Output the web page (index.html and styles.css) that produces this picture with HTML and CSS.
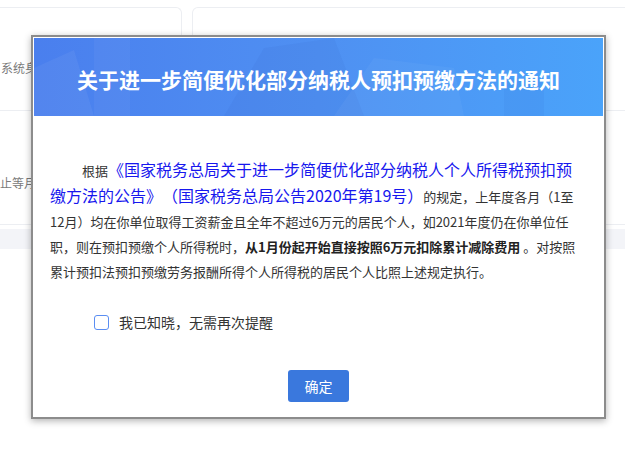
FILE: index.html
```html
<!DOCTYPE html>
<html lang="zh-CN">
<head>
    <meta charset="UTF-8">
    <meta name="viewport" content="width=device-width, initial-scale=1.0">
    <title>预扣预缴通知</title>
    <link rel="stylesheet" href="styles.css">
</head>
<body>
    <!-- page behind the notice -->
    <div class="page">
        <div class="cards">
            <div class="card card-left">
                <span class="muted">系统身份</span>
            </div>
            <div class="card card-right"></div>
        </div>
        <div class="row">
            <span class="muted">止等月份</span>
        </div>
        <div class="band"></div>
    </div>

    <div class="dialog">
        <div class="dialog-head">
            <svg class="head-art" width="570" height="78" viewBox="0 0 570 78">
                <path d="M0 78 L0 30 L40 12 L60 78 Z" fill="#ffffff" opacity="0.05"/>
                <rect x="60" y="0" width="36" height="78" fill="#ffffff" opacity="0.04"/>
                <path d="M190 78 L230 10 L300 0 L330 78 Z" fill="#1c3fa8" opacity="0.06"/>
                <path d="M300 78 L340 20 L420 30 L430 78 Z" fill="#ffffff" opacity="0.04"/>
                <rect x="470" y="40" width="40" height="38" fill="#1c3fa8" opacity="0.05"/>
            </svg>
            <h2>关于进一步简便优化部分纳税人预扣预缴方法的通知</h2>
        </div>
        <div class="dialog-body">
            <p class="notice">
                <span class="indent">根据</span><span class="link">《国家税务总局关于进一步简便优化部分纳税人个人所得税预扣预</span><br>
                <span class="link">缴方法的公告》（国家税务总局公告2020年第19号）</span>的规定，上年度各月（1至<br>
                12月）均在你单位取得工资薪金且全年不超过6万元的居民个人，如2021年度仍在你单位任<br>
                职，则在预扣预缴个人所得税时，<b>从1月份起开始直接按照6万元扣除累计减除费用</b> 。对按照<br>
                累计预扣法预扣预缴劳务报酬所得个人所得税的居民个人比照上述规定执行。
            </p>
            <label class="check">
                <span class="box"></span>
                <span>我已知晓，无需再次提醒</span>
            </label>
            <div class="actions">
                <button class="btn">确定</button>
            </div>
        </div>
    </div>
</body>
</html>
```

FILE: styles.css
```css
/* Base */
body {
    margin: 0;
    font-family: "Noto Sans CJK SC", "Noto Sans", sans-serif;
    background: #fff;
    color: #333;
    width: 625px;
    height: 455px;
    overflow: hidden;
    position: relative;
    text-spacing-trim: space-all;
}

/* Page behind */
.page {
    padding-top: 7px;
}

.cards {
    display: flex;
    gap: 10px;
    height: 103px;
    border-bottom: 1px solid #eceef2;
}

.card {
    border: 1px solid #eceef2;
    border-bottom: none;
    border-radius: 6px 6px 0 0;
    display: flex;
    align-items: center;
}

.card-left {
    width: 190px;
    margin-left: -10px;
    padding-top: 16px;
}

.card-right {
    flex: 1;
    margin-right: -10px;
}

.muted {
    font-size: 12px;
    color: #7a7a7a;
    margin-left: 10px;
    white-space: nowrap;
}

.row {
    height: 114px;
    display: flex;
    align-items: center;
    padding-top: 30px;
    box-sizing: border-box;
    border-bottom: 1px solid #eceef2;
}

.row .muted {
    margin-left: 0;
}

.band {
    margin-top: 4px;
    height: 20px;
    background: #f3f4f8;
}

/* Dialog */
.dialog {
    position: absolute;
    left: 31px;
    top: 35px;
    width: 571px;
    border: 2px solid #8c8c8c;
    background: #fff;
    box-shadow: 0 2px 7px rgba(0, 0, 0, 0.3);
}

.dialog-head {
    position: relative;
    height: 78px;
    margin: 1px 1px 0;
    background: linear-gradient(to right, #4a7fee, #4f90f2 50%, #4aa3fa);
    display: flex;
    align-items: center;
    justify-content: center;
    overflow: hidden;
}

.head-art {
    position: absolute;
    left: 0;
    top: 0;
}

.dialog-head h2 {
    position: relative;
    margin: 4px 0 0;
    font-size: 21px;
    font-weight: bold;
    color: #fff;
}

.dialog-body {
    padding: 41px 0 15px;
}

.notice {
    margin: 0;
    padding: 0 12px 0 17px;
    font-size: 13px;
    line-height: 25px;
    color: #333;
    white-space: nowrap;
}

.indent {
    margin-left: 32px;
}

.link {
    font-size: 16px;
    color: #1717ee;
}

.notice b {
    color: #222;
}

/* Checkbox */
.check {
    display: flex;
    align-items: center;
    gap: 10px;
    margin: 28px 0 0 61px;
    font-size: 14px;
    color: #333;
    height: 20px;
}

.box {
    width: 13px;
    height: 13px;
    border: 1.5px solid #5b8ef2;
    border-radius: 3px;
}

/* Button */
.actions {
    display: flex;
    justify-content: center;
    margin-top: 38px;
}

.btn {
    width: 61px;
    height: 32px;
    border: none;
    border-radius: 3px;
    background: #3a78dd;
    color: #fff;
    font-family: inherit;
    font-size: 14px;
    cursor: pointer;
}
```
